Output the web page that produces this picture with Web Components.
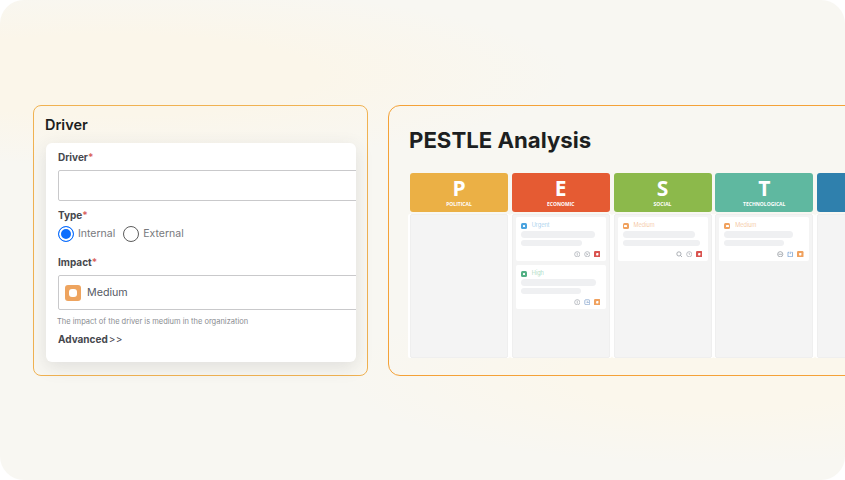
<!DOCTYPE html>
<html lang="en">
<head>
<meta charset="utf-8">
<title>PESTLE driver</title>
<style>
    html, body { margin: 0; background: #fff; }
    body { width: 845px; height: 480px; overflow: hidden; font-family: "Inter", "Liberation Sans", sans-serif; }
</style>
</head>
<body>
<promo-frame>
    <driver-panel></driver-panel>
    <pestle-panel>
        <pestle-column letter="P" name="POLITICAL" color="#ebb045"></pestle-column>
        <pestle-column letter="E" name="ECONOMIC" color="#e55b33">
            <pestle-card level="Urgent" tone="#4aa3df" text-tone="#8cc3e8" bars="74,61" tools="info:#a9adb3,cross:#a9adb3,box:#d9534f"></pestle-card>
            <pestle-card level="High" tone="#52b084" text-tone="#8fcfae" bars="75,60" tools="info:#a9adb3,enter:#7f9fc9,box:#f0a15e"></pestle-card>
        </pestle-column>
        <pestle-column letter="S" name="SOCIAL" color="#8cb94b">
            <pestle-card level="Medium" tone="#f0a15e" text-tone="#f2b88a" bars="72,77" tools="search:#8f949b,clock:#a9adb3,box:#d9534f"></pestle-card>
        </pestle-column>
        <pestle-column letter="T" name="TECHNOLOGICAL" color="#5fb8a0">
            <pestle-card level="Medium" tone="#f0a15e" text-tone="#f2b88a" bars="69,60" tools="gear:#8f949b,power:#6f9bd1,box:#f0a15e"></pestle-card>
        </pestle-column>
        <pestle-column color="#2f80ad"></pestle-column>
    </pestle-panel>
</promo-frame>

<script>
//--------------------------------------------------------
// Frame with the soft background swooshes
//--------------------------------------------------------
class PromoFrame extends HTMLElement {
    constructor() {
        super();
        this.attachShadow({ mode: "open" });
        this.shadowRoot.innerHTML = `
        <style>
            :host {
                display: flex;
                gap: 20px;
                box-sizing: border-box;
                width: 845px;
                height: 480px;
                padding: 105px 0 0 33px;
                align-items: flex-start;
                overflow: hidden;
                border-radius: 24px;
                background-color: #f8f7f2;
                background-image:
                    radial-gradient(ellipse 380px 90px at 720px 375px, #fbf7ec 40%, rgba(251, 247, 236, 0) 100%),
                    radial-gradient(ellipse 460px 90px at 110px 75px, #fbf6ea 45%, rgba(251, 246, 234, 0) 100%);
            }
        </style>
        <slot></slot>`;
    }
}

//--------------------------------------------------------
// Left form panel
//--------------------------------------------------------
class DriverPanel extends HTMLElement {
    constructor() {
        super();
        this.attachShadow({ mode: "open" });
        this.shadowRoot.innerHTML = `
        <style>
            :host {
                display: block;
                flex: none;
                box-sizing: border-box;
                width: 335px;
                height: 271px;
                padding: 9px 11px 0 11px;
                border: 1px solid #f0b252;
                border-radius: 8px;
                color: #212529;
            }
            h2 { margin: 0 0 9px 0; font: 600 14.5px/19px "Inter", sans-serif; color: #1d1f21; }
            .card {
                height: 219px;
                box-sizing: border-box;
                margin-left: 1px;
                padding: 7px 0 0 12px;
                overflow: hidden;
                background: #fff;
                border-radius: 6px;
                box-shadow: 0 5px 18px rgba(60, 60, 70, .13);
            }
            label { display: block; font: 700 10px/14px "Inter", sans-serif; color: #46474d; }
            label b { color: #d8615c; font-weight: 600; }
            .input {
                box-sizing: border-box;
                width: 320px;
                height: 31px;
                margin: 6px 0 7px;
                border: 1px solid #c9c9cb;
                border-radius: 2px;
            }
            .radios { display: flex; align-items: center; height: 18px; margin: 3px 0 12px; font: 400 10.5px/18px "Inter", sans-serif; color: #77797d; }
            .radio { box-sizing: border-box; width: 16px; height: 16px; margin-right: 4px; border: 1px solid #5c5c5c; border-radius: 50%; }
            .radio.on { border: 1.5px solid #0d6efd; box-shadow: inset 0 0 0 2px #fff; background: #0d6efd; }
            .radios span + .radio { margin-left: 8px; }
            .select {
                display: flex;
                align-items: center;
                gap: 6px;
                box-sizing: border-box;
                width: 320px;
                height: 35px;
                margin-top: 6px;
                padding-left: 6px;
                border: 1px solid #c9c9cb;
                border-radius: 2px;
                font: 400 10.7px/1 "Inter", sans-serif;
                color: #555a64;
            }
            .swatch { display: flex; align-items: center; justify-content: center; width: 16px; height: 16px; border-radius: 3px; background: #eea45f; }
            .swatch i { width: 8px; height: 8px; border-radius: 3px; background: #fff; }
            .val { padding-top: 1px; }
            .help { margin: 7px 0 5px -1px; font: 400 7.5px/10px "Inter", sans-serif; color: #8a8c90; white-space: nowrap; }
            .adv { font: 700 10px/14px "Inter", sans-serif; color: #46474d; }
            .adv span { font-weight: 400; letter-spacing: .5px; margin-left: 1px; }
        </style>
        <h2>Driver</h2>
        <div class="card">
            <label>Driver<b>*</b></label>
            <div class="input"></div>
            <label>Type<b>*</b></label>
            <div class="radios">
                <div class="radio on"></div><span>Internal</span>
                <div class="radio"></div><span>External</span>
            </div>
            <label>Impact<b>*</b></label>
            <div class="select"><div class="swatch"><i></i></div><span class="val">Medium</span></div>
            <div class="help">The impact of the driver is medium in the organization</div>
            <div class="adv">Advanced<span>&gt;&gt;</span></div>
        </div>`;
    }
}

//--------------------------------------------------------
// PESTLE board
//--------------------------------------------------------
class PestlePanel extends HTMLElement {
    constructor() {
        super();
        this.attachShadow({ mode: "open" });
        this.shadowRoot.innerHTML = `
        <style>
            :host {
                display: block;
                flex: none;
                box-sizing: border-box;
                width: 520px;
                height: 271px;
                padding: 19px 0 0 20px;
                border: 1px solid #f4a238;
                border-radius: 12px;
            }
            h1 { margin: 0 0 18px; font: 700 22.2px/30px "Inter", sans-serif; color: #1d1f21; }
            .board { display: flex; gap: 3.75px; margin-left: 1px; }
        </style>
        <h1>PESTLE Analysis</h1>
        <div class="board"><slot></slot></div>`;
    }
}

class PestleColumn extends HTMLElement {
    constructor() {
        super();
        this.attachShadow({ mode: "open" });
        this.shadowRoot.innerHTML = `
        <style>
            :host { display: block; flex: none; width: 98px; }
            .head {
                height: 39px;
                box-sizing: border-box;
                padding-top: 2px;
                border-radius: 3px;
                text-align: center;
                color: #fff;
                font-family: "Open Sans", sans-serif;
                font-weight: 700;
            }
            .letter { font-size: 21px; line-height: 26px; }
            .name { font-size: 5px; line-height: 7px; }
            .body {
                display: flex;
                flex-direction: column;
                gap: 4px;
                height: 144px;
                box-sizing: border-box;
                margin-top: 2px;
                padding: 2px 3px;
                background: #f4f4f4;
                border: 1px solid #efefef;
                border-radius: 2px;
                box-shadow: 2px 0 0 #fff, -2px 0 0 #fff;
            }
        </style>
        <div class="head"><div class="letter"></div><div class="name"></div></div>
        <div class="body"><slot></slot></div>`;
    }

    connectedCallback() {
        this.shadowRoot.querySelector(".head").style.background = this.getAttribute("color");
        this.shadowRoot.querySelector(".letter").textContent = this.getAttribute("letter");
        this.shadowRoot.querySelector(".name").textContent = this.getAttribute("name");
    }
}

const TOOL_ICONS = {
    info: '<circle cx="4" cy="4" r="3.2"/><path d="M4 2.2v3.6"/>',
    cross: '<circle cx="4" cy="4" r="3.2"/><path d="M2.8 2.8l2.4 2.4M5.2 2.8L2.8 5.2"/>',
    enter: '<rect x="1" y="1" width="6" height="6" rx="1"/><path d="M3 4h2.4M4.4 3l1 1-1 1"/>',
    search: '<circle cx="3.6" cy="3.6" r="2.6"/><path d="M5.6 5.6L7.4 7.4"/>',
    clock: '<circle cx="4" cy="4" r="3.2"/><path d="M4 2.2V4l1.2.8"/>',
    gear: '<circle cx="4" cy="4" r="3.2"/><path d="M1.8 4h4.4"/>',
    power: '<path d="M2.6 1.6H1.2v5.4h5.6V1.6H5.4M4 .8v3"/>',
    box: null
};

class PestleCard extends HTMLElement {
    constructor() {
        super();
        this.attachShadow({ mode: "open" });
        this.shadowRoot.innerHTML = `
        <style>
            :host {
                display: block;
                box-sizing: border-box;
                height: 44px;
                padding: 5px 5px 0;
                background: #fff;
                border-radius: 2px;
            }
            .top { display: flex; align-items: center; gap: 5px; height: 7px; font: 300 5.6px/7px "Inter", sans-serif; }
            .dot { display: flex; align-items: center; justify-content: center; width: 6px; height: 6px; margin-top: 1px; border-radius: 1.5px; }
            .dot i { width: 2.5px; height: 2.5px; background: #fff; border-radius: .5px; }
            .bar { height: 6.5px; margin-top: 2px; border-radius: 3.5px; background: #eff0f2; }
            .tools { display: flex; justify-content: flex-end; gap: 3.5px; margin-top: 4.5px; padding-right: .5px; }
            svg { display: block; width: 6.5px; height: 6.5px; fill: none; stroke-width: .9; }
        </style>
        <div class="top"><div class="dot"><i></i></div><span class="level"></span></div>
        <div class="bars"></div>
        <div class="tools"></div>`;
    }

    connectedCallback() {
        const root = this.shadowRoot;
        const tone = this.getAttribute("tone");
        root.querySelector(".dot").style.background = tone;
        const level = root.querySelector(".level");
        level.textContent = this.getAttribute("level");
        level.style.color = this.getAttribute("text-tone");
        root.querySelector(".bars").innerHTML = this.getAttribute("bars").split(",")
            .map((w) => `<div class="bar" style="width:${w}px"></div>`).join("");
        root.querySelector(".tools").innerHTML = this.getAttribute("tools").split(",").map((t) => {
            const [name, color] = t.split(":");
            if (name === "box") {
                return `<svg viewBox="0 0 8 8"><rect width="8" height="8" rx="1.4" fill="${color}"/><rect x="2.6" y="2.6" width="2.8" height="2.8" rx=".6" fill="#fff"/></svg>`;
            }
            return `<svg viewBox="0 0 8 8" stroke="${color}">${TOOL_ICONS[name]}</svg>`;
        }).join("");
    }
}

customElements.define("promo-frame", PromoFrame);
customElements.define("driver-panel", DriverPanel);
customElements.define("pestle-panel", PestlePanel);
customElements.define("pestle-column", PestleColumn);
customElements.define("pestle-card", PestleCard);
</script>
</body>
</html>
